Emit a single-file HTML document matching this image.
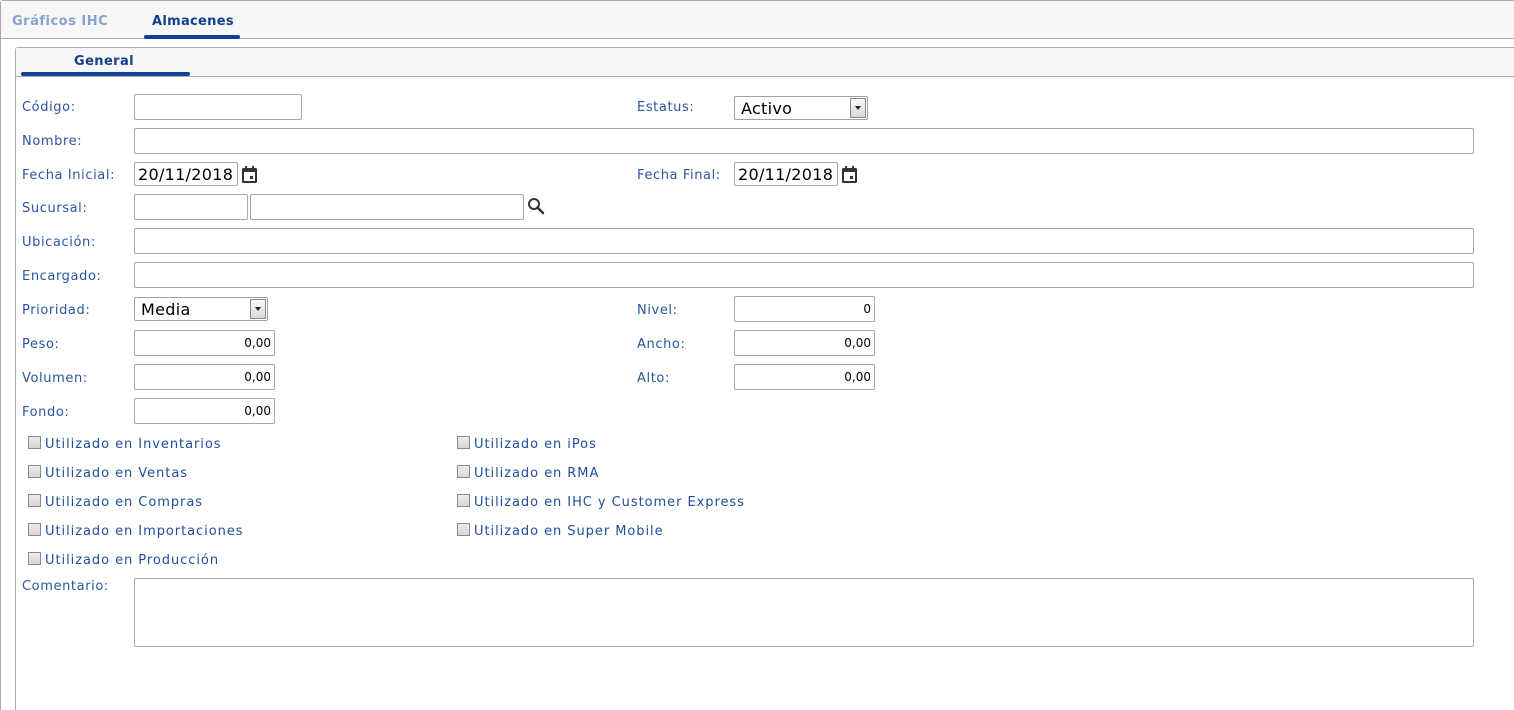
<!DOCTYPE html>
<html><head><meta charset="utf-8"><style>
*{box-sizing:border-box;margin:0;padding:0}
body{width:1514px;height:710px;background:#fff;position:relative;overflow:hidden;font-family:"DejaVu Sans","Liberation Sans",sans-serif;font-size:13px;letter-spacing:0.5px;color:#1f4e9c}
.a{position:absolute}
.lbl{position:absolute;color:#2a55a0;line-height:14px;font-size:13px;letter-spacing:0.6px}
.in{position:absolute;border:1px solid #a8a8a8;border-radius:2px;background:#fff;height:26px}
.num{font-size:12px;color:#000;text-align:right;padding-right:3px;line-height:24px;letter-spacing:0}
.sel{position:absolute;border:1px solid #a0a0a0;border-radius:2px;background:#fff;height:24px;color:#000;font-size:16px;letter-spacing:0.3px;line-height:24px;padding-left:6px}
.sel .b{position:absolute;right:1px;top:1px;width:16px;height:20px;background:linear-gradient(#fafafa,#d8d8d8);border:1px solid #888}
.sel .b:after{content:"";position:absolute;left:4px;top:7px;border-left:3px solid transparent;border-right:3px solid transparent;border-top:4px solid #222}
.date{position:absolute;border:1px solid #a8a8a8;border-radius:2px;height:24px;color:#000;font-size:16px;letter-spacing:0.3px;line-height:24px;padding-left:3px}
.cb{position:absolute;width:13px;height:13px;border:1px solid #8a8a8a;background:linear-gradient(#ececec,#d6d6d6)}
.ct{position:absolute;color:#1f4e9c;font-size:13px;line-height:14px;letter-spacing:0.95px}
</style></head><body>
<div class="a" style="left:0;top:0;width:1514px;height:710px;border-left:1px solid #aaa;border-top:1px solid #aaa;border-radius:3px 0 0 0"></div>
<div class="a" style="left:1px;top:1px;width:1513px;height:38px;background:#f7f7f7;border-bottom:1px solid #aaa"></div>
<div class="a" style="left:12px;top:14px;font-weight:bold;font-size:13px;color:#86a3d0;letter-spacing:0.5px">Gráficos IHC</div>
<div class="a" style="left:152px;top:14px;font-weight:bold;font-size:13px;color:#123f8c;letter-spacing:0.3px">Almacenes</div>
<div class="a" style="left:144px;top:35px;width:96px;height:4px;background:#0e4194;border-radius:2px"></div>
<div class="a" style="left:15px;top:47px;width:1499px;height:663px;border-left:1px solid #aaa;border-top:1px solid #aaa;border-radius:3px 0 0 0"></div>
<div class="a" style="left:16px;top:48px;width:1498px;height:29px;background:#f7f7f7;border-bottom:1px solid #aaa"></div>
<div class="a" style="left:74px;top:54px;font-weight:bold;font-size:13px;color:#123f8c;letter-spacing:0.4px">General</div>
<div class="a" style="left:21px;top:72px;width:169px;height:4px;background:#0e4194;border-radius:2px"></div>

<div class="lbl" style="left:22px;top:101px">Código:</div>
<div class="in" style="left:134px;top:94px;width:168px"></div>
<div class="lbl" style="left:637px;top:101px">Estatus:</div>
<div class="sel" style="left:734px;top:96px;width:134px">Activo<div class="b"></div></div>

<div class="lbl" style="left:22px;top:135px">Nombre:</div>
<div class="in" style="left:134px;top:128px;width:1340px"></div>

<div class="lbl" style="left:22px;top:169px">Fecha Inicial:</div>
<div class="date" style="left:134px;top:162px;width:104px">20/11/2018</div>
<svg class="a" style="left:241px;top:165px" width="17" height="19" viewBox="0 0 17 19"><rect x="1" y="3" width="15" height="15" rx="1.5" fill="#333"/><rect x="3" y="7" width="11" height="9" fill="#fff"/><rect x="4" y="1" width="2" height="4" fill="#333"/><rect x="11" y="1" width="2" height="4" fill="#333"/><rect x="9" y="11" width="3" height="3" fill="#333"/></svg>
<div class="lbl" style="left:637px;top:169px">Fecha Final:</div>
<div class="date" style="left:734px;top:162px;width:104px">20/11/2018</div>
<svg class="a" style="left:841px;top:165px" width="17" height="19" viewBox="0 0 17 19"><rect x="1" y="3" width="15" height="15" rx="1.5" fill="#333"/><rect x="3" y="7" width="11" height="9" fill="#fff"/><rect x="4" y="1" width="2" height="4" fill="#333"/><rect x="11" y="1" width="2" height="4" fill="#333"/><rect x="9" y="11" width="3" height="3" fill="#333"/></svg>

<div class="lbl" style="left:22px;top:202px">Sucursal:</div>
<div class="in" style="left:134px;top:194px;width:114px"></div>
<div class="in" style="left:250px;top:194px;width:274px"></div>
<svg class="a" style="left:527px;top:197px" width="19" height="19" viewBox="0 0 19 19"><circle cx="7" cy="7" r="5" fill="none" stroke="#333" stroke-width="2"/><line x1="10.5" y1="10.5" x2="16" y2="16" stroke="#333" stroke-width="2.5" stroke-linecap="round"/></svg>

<div class="lbl" style="left:22px;top:236px">Ubicación:</div>
<div class="in" style="left:134px;top:228px;width:1340px"></div>
<div class="lbl" style="left:22px;top:270px">Encargado:</div>
<div class="in" style="left:134px;top:262px;width:1340px"></div>

<div class="lbl" style="left:22px;top:304px">Prioridad:</div>
<div class="sel" style="left:134px;top:297px;width:134px">Media<div class="b"></div></div>
<div class="lbl" style="left:637px;top:304px">Nivel:</div>
<div class="in num" style="left:734px;top:296px;width:141px">0</div>

<div class="lbl" style="left:22px;top:338px">Peso:</div>
<div class="in num" style="left:134px;top:330px;width:141px">0,00</div>
<div class="lbl" style="left:637px;top:338px">Ancho:</div>
<div class="in num" style="left:734px;top:330px;width:141px">0,00</div>
<div class="lbl" style="left:22px;top:372px">Volumen:</div>
<div class="in num" style="left:134px;top:364px;width:141px">0,00</div>
<div class="lbl" style="left:637px;top:372px">Alto:</div>
<div class="in num" style="left:734px;top:364px;width:141px">0,00</div>
<div class="lbl" style="left:22px;top:406px">Fondo:</div>
<div class="in num" style="left:134px;top:398px;width:141px">0,00</div>

<div class="cb" style="left:28px;top:436px"></div><div class="ct" style="left:45px;top:438px">Utilizado en Inventarios</div>
<div class="cb" style="left:28px;top:465px"></div><div class="ct" style="left:45px;top:467px">Utilizado en Ventas</div>
<div class="cb" style="left:28px;top:494px"></div><div class="ct" style="left:45px;top:496px">Utilizado en Compras</div>
<div class="cb" style="left:28px;top:523px"></div><div class="ct" style="left:45px;top:525px">Utilizado en Importaciones</div>
<div class="cb" style="left:28px;top:552px"></div><div class="ct" style="left:45px;top:554px">Utilizado en Producción</div>
<div class="cb" style="left:457px;top:436px"></div><div class="ct" style="left:474px;top:438px">Utilizado en iPos</div>
<div class="cb" style="left:457px;top:465px"></div><div class="ct" style="left:474px;top:467px">Utilizado en RMA</div>
<div class="cb" style="left:457px;top:494px"></div><div class="ct" style="left:474px;top:496px">Utilizado en IHC y Customer Express</div>
<div class="cb" style="left:457px;top:523px"></div><div class="ct" style="left:474px;top:525px">Utilizado en Super Mobile</div>

<div class="lbl" style="left:22px;top:580px">Comentario:</div>
<div class="in" style="left:134px;top:578px;width:1340px;height:69px"></div>
</body></html>
